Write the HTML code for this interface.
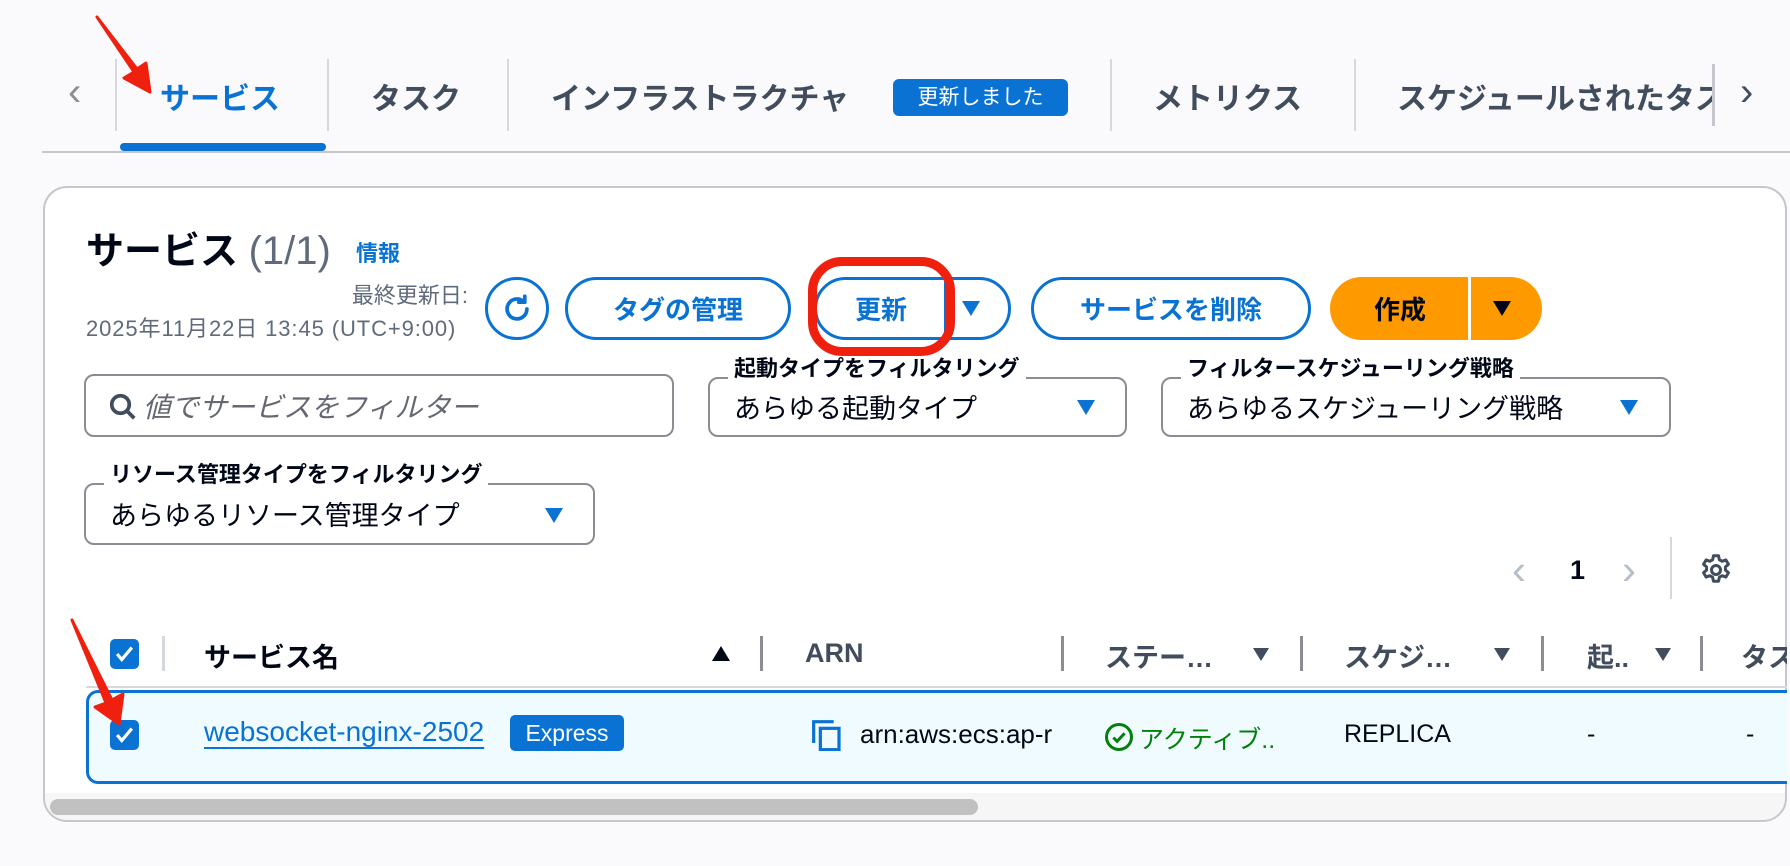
<!DOCTYPE html>
<html><head><meta charset="utf-8">
<style>
*{box-sizing:border-box;margin:0;padding:0}
body{width:1790px;height:866px;background:#fafafc;font-family:"Liberation Sans","Noto Sans CJK JP",sans-serif;position:relative;overflow:hidden;color:#000716}
.a{position:absolute;white-space:nowrap}
.tab{font-size:30px;font-weight:bold;color:#414d5c;top:74px}
.vd{position:absolute;width:2px;background:#d5d8dc}
.btn{position:absolute;border:3px solid #0972d3;border-radius:40px;color:#0972d3;font-weight:bold;font-size:26px;display:flex;align-items:center;justify-content:center;background:#fff;white-space:nowrap}
.sel{position:absolute;border:2px solid #8c8c94;border-radius:10px;background:#fff}
.lbl{position:absolute;font-size:22px;font-weight:bold;background:#fff;padding:0 6px;color:#000716;line-height:26px;white-space:nowrap}
.val{position:absolute;font-size:27px;color:#000716;white-space:nowrap}
.tri{position:absolute;width:0;height:0;border-left:9px solid transparent;border-right:9px solid transparent;border-top:15px solid #0972d3}
.th{position:absolute;top:636px;font-size:27px;font-weight:bold;color:#414d5c;overflow:hidden;white-space:nowrap}
.hd{position:absolute;top:636px;width:3px;height:35px;background:#8c8c94}
.cb{position:absolute;width:29px;height:30px;background:#0972d3;border-radius:5px}
.dt{position:absolute;width:0;height:0;border-left:8px solid transparent;border-right:8px solid transparent;border-top:13px solid #414d5c}
</style></head><body>

<!-- tabs -->
<div class="a" style="left:68px;top:70px;font-size:40px;color:#8c8c94">&#8249;</div>
<div class="vd" style="left:115px;top:59px;height:72px"></div>
<div class="a tab" style="left:160px;color:#0972d3">サービス</div>
<div class="a" style="left:120px;top:143px;width:206px;height:8px;border-radius:4px;background:#0972d3"></div>
<div class="vd" style="left:327px;top:59px;height:72px"></div>
<div class="a tab" style="left:371px">タスク</div>
<div class="vd" style="left:507px;top:59px;height:72px"></div>
<div class="a tab" style="left:551px">インフラストラクチャ</div>
<div class="a" style="left:893px;top:79px;width:175px;height:37px;border-radius:6px;background:#0972d3;color:#fff;font-size:21px;line-height:37px;text-align:center">更新しました</div>
<div class="vd" style="left:1110px;top:59px;height:72px"></div>
<div class="a tab" style="left:1153px">メトリクス</div>
<div class="vd" style="left:1354px;top:59px;height:72px"></div>
<div class="a tab" style="left:1397px;width:315px;overflow:hidden">スケジュールされたタスク</div>
<div class="vd" style="left:1712px;top:64px;height:62px;background:#c6c6cd;width:3px"></div>
<div class="a" style="left:1740px;top:70px;font-size:40px;color:#414d5c">&#8250;</div>
<div class="a" style="left:42px;top:151px;width:1748px;height:2px;background:#c6c6cd"></div>

<!-- container -->
<div class="a" style="left:43px;top:186px;width:1744px;height:636px;border:2px solid #c6c6cd;border-radius:24px;background:#fff"></div>

<div class="a" style="left:86px;top:220px;font-size:38px;font-weight:bold">サービス <span style="font-weight:normal;color:#5f6b7a;font-size:40px">(1/1)</span></div>
<div class="a" style="left:356px;top:236px;font-size:22px;font-weight:bold;color:#0972d3">情報</div>
<div class="a" style="left:200px;top:278px;width:268px;text-align:right;font-size:22px;color:#5f6b7a">最終更新日:</div>
<div class="a" style="left:86px;top:311px;font-size:22px;letter-spacing:0.9px;color:#5f6b7a">2025年11月22日 13:45 (UTC+9:00)</div>

<div class="btn" style="left:485px;top:277px;width:64px;height:63px">
<svg width="34" height="34" viewBox="0 0 24 24" fill="none" stroke="#0972d3" stroke-width="2.6" stroke-linecap="round"><path d="M19 12a7 7 0 1 1-2.5-5.4"/><path d="M17.5 3v4.2h-4.2" stroke-linejoin="round"/></svg></div>
<div class="btn" style="left:565px;top:277px;width:226px;height:63px">タグの管理</div>
<div class="btn" style="left:814px;top:277px;width:197px;height:63px;justify-content:flex-start;padding-left:38px">更新</div>
<div class="a" style="left:944px;top:282px;width:3px;height:53px;background:#0972d3"></div>
<div class="tri" style="left:962px;top:301px"></div>
<div class="btn" style="left:1031px;top:277px;width:280px;height:63px">サービスを削除</div>
<div class="a" style="left:1330px;top:277px;width:212px;height:63px;border-radius:32px;background:#ff9900"></div>
<div class="a" style="left:1374px;top:290px;font-size:26px;font-weight:bold">作成</div>
<div class="a" style="left:1468px;top:277px;width:3px;height:63px;background:#fff"></div>
<div class="tri" style="left:1493px;top:301px;border-top-color:#000716"></div>
<div class="a" style="left:808px;top:257px;width:147px;height:99px;border:9px solid #f0200f;border-radius:34px"></div>

<!-- filters -->
<div class="sel" style="left:84px;top:374px;width:590px;height:63px"></div>
<svg class="a" style="left:108px;top:392px" width="30" height="30" viewBox="0 0 24 24" fill="none" stroke="#414d5c" stroke-width="3"><circle cx="10" cy="10" r="7"/><path d="M15 15l6 6"/></svg>
<div class="a" style="left:143px;top:386px;font-size:28px;font-style:italic;color:#656871">値でサービスをフィルター</div>

<div class="sel" style="left:708px;top:377px;width:419px;height:60px"></div>
<div class="lbl" style="left:728px;top:356px">起動タイプをフィルタリング</div>
<div class="val" style="left:734px;top:387px">あらゆる起動タイプ</div>
<div class="tri" style="left:1077px;top:400px"></div>

<div class="sel" style="left:1161px;top:377px;width:510px;height:60px"></div>
<div class="lbl" style="left:1181px;top:356px">フィルタースケジューリング戦略</div>
<div class="val" style="left:1187px;top:387px">あらゆるスケジューリング戦略</div>
<div class="tri" style="left:1620px;top:400px"></div>

<div class="sel" style="left:84px;top:483px;width:511px;height:62px"></div>
<div class="lbl" style="left:104px;top:462px">リソース管理タイプをフィルタリング</div>
<div class="val" style="left:110px;top:494px">あらゆるリソース管理タイプ</div>
<div class="tri" style="left:545px;top:508px"></div>

<!-- pagination -->
<div class="a" style="left:1512px;top:546px;font-size:42px;color:#b6bec9">&#8249;</div>
<div class="a" style="left:1570px;top:555px;font-size:27px;font-weight:bold">1</div>
<div class="a" style="left:1622px;top:546px;font-size:42px;color:#b6bec9">&#8250;</div>
<div class="a" style="left:1670px;top:537px;width:2px;height:62px;background:#d5d8dc"></div>
<svg class="a" style="left:1698px;top:552px" width="36" height="36" viewBox="0 0 24 24" fill="none" stroke="#414d5c" stroke-width="2"><circle cx="12" cy="12" r="3"/><path d="M10.3 2.5h3.4l.5 2.6 1.9 1.1 2.5-.9 1.7 2.9-2 1.7v2.2l2 1.7-1.7 2.9-2.5-.9-1.9 1.1-.5 2.6h-3.4l-.5-2.6-1.9-1.1-2.5.9-1.7-2.9 2-1.7v-2.2l-2-1.7 1.7-2.9 2.5.9 1.9-1.1z" stroke-linejoin="round"/></svg>

<!-- table header -->
<div class="cb" style="left:110px;top:639px"></div>
<svg class="a" style="left:113px;top:643px" width="23" height="22" viewBox="0 0 24 24" fill="none" stroke="#fff" stroke-width="3.5"><path d="M4 12l5 6L20 5"/></svg>
<div class="hd" style="left:162px;background:#d5d8dc"></div>
<div class="th" style="left:204px;color:#000716">サービス名</div>
<div class="a" style="left:712px;top:646px;width:0;height:0;border-left:9px solid transparent;border-right:9px solid transparent;border-bottom:15px solid #000716"></div>
<div class="hd" style="left:760px"></div>
<div class="th" style="left:805px;top:638px">ARN</div>
<div class="hd" style="left:1061px"></div>
<div class="th" style="left:1105px">ステー…</div>
<div class="dt" style="left:1253px;top:648px"></div>
<div class="hd" style="left:1300px"></div>
<div class="th" style="left:1344px">スケジ…</div>
<div class="dt" style="left:1494px;top:648px"></div>
<div class="hd" style="left:1541px"></div>
<div class="th" style="left:1587px">起..</div>
<div class="dt" style="left:1655px;top:648px"></div>
<div class="hd" style="left:1700px"></div>
<div class="th" style="left:1741px;width:46px">タス</div>
<div class="a" style="left:86px;top:686px;width:1701px;height:2px;background:#d5d8dc"></div>

<!-- row -->
<div class="a" style="left:86px;top:690px;width:1701px;height:94px;border:3px solid #0972d3;border-right:none;border-radius:12px 0 0 12px;background:#f0fbff"></div>
<div class="cb" style="left:110px;top:720px"></div>
<svg class="a" style="left:113px;top:724px" width="23" height="22" viewBox="0 0 24 24" fill="none" stroke="#fff" stroke-width="3.5"><path d="M4 12l5 6L20 5"/></svg>
<div class="a" style="left:204px;top:716px;font-size:28px;color:#0972d3;text-decoration:underline;text-underline-offset:6px">websocket-nginx-2502</div>
<div class="a" style="left:510px;top:715px;width:114px;height:36px;border-radius:5px;background:#0972d3;color:#fff;font-size:23px;line-height:36px;text-align:center">Express</div>
<svg class="a" style="left:811px;top:719px" width="32" height="32" viewBox="0 0 24 24" fill="none" stroke="#0972d3" stroke-width="2.4"><path d="M2 18V2h15"/><rect x="7" y="7" width="14" height="16"/></svg>
<div class="a" style="left:860px;top:719px;font-size:26px">arn:aws:ecs:ap-r</div>
<svg class="a" style="left:1104px;top:722px" width="30" height="30" viewBox="0 0 24 24" fill="none" stroke="#037f0c" stroke-width="2.4"><circle cx="12" cy="12" r="10"/><path d="M7.5 12.5l3 3 6-6.5"/></svg>
<div class="a" style="left:1139px;top:720px;font-size:25px;color:#037f0c">アクティブ..</div>
<div class="a" style="left:1344px;top:720px;font-size:25px">REPLICA</div>
<div class="a" style="left:1587px;top:720px;font-size:25px">-</div>
<div class="a" style="left:1746px;top:720px;font-size:25px">-</div>

<!-- scrollbar -->
<div class="a" style="left:45px;top:793px;width:1740px;height:27px;background:#f6f6f6;border-radius:0 0 22px 22px"></div>
<div class="a" style="left:50px;top:799px;width:928px;height:16px;border-radius:8px;background:#c1c1c1"></div>

<!-- red arrows -->
<svg class="a" style="left:0;top:0" width="1790" height="866" viewBox="0 0 1790 866">
<path d="M97 17 L134 72 L124 78 L150 92 L146 63 L137 69 Z" fill="#f0200f" stroke="#f0200f" stroke-width="3" stroke-linejoin="round"/>
<path d="M72 620 L106 703 L95 707 L119 724 L123 694 L112 700 Z" fill="#f0200f" stroke="#f0200f" stroke-width="3" stroke-linejoin="round"/>
</svg>
</body></html>
